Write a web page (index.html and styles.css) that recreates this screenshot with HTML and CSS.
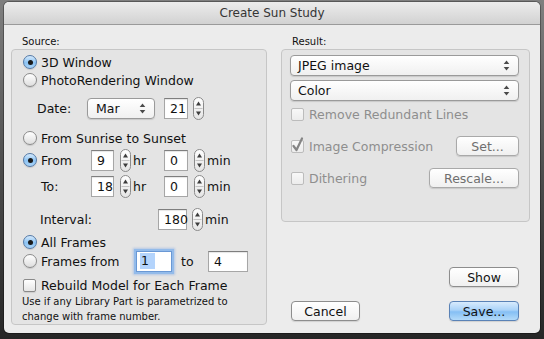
FILE: index.html
```html
<!DOCTYPE html>
<html>
<head>
<meta charset="utf-8">
<title>Create Sun Study</title>
<link rel="stylesheet" href="styles.css">
</head>
<body>
<svg class="defs" width="0" height="0">
  <defs>
    <linearGradient id="stg" x1="0" y1="0" x2="0" y2="1">
      <stop offset="0" stop-color="#ffffff"/>
      <stop offset="1" stop-color="#e4e4e4"/>
    </linearGradient>
    <symbol id="stepper" viewBox="0 0 11 23">
      <rect x="0.5" y="0.5" width="10" height="22" rx="5" fill="url(#stg)" stroke="#8a8a8a"/>
      <line x1="1.5" y1="11.5" x2="9.5" y2="11.5" stroke="#c4c4c4"/>
      <path d="M5.5 4.5 L8 8.5 L3 8.5 Z" fill="#3c3c3c"/>
      <path d="M5.5 18.5 L8 14.5 L3 14.5 Z" fill="#3c3c3c"/>
    </symbol>
    <symbol id="updown" viewBox="0 0 7 11">
      <path d="M3.5 0.5 L6.3 4 L0.7 4 Z" fill="#4a4a4a"/>
      <path d="M3.5 10.5 L6.3 7 L0.7 7 Z" fill="#4a4a4a"/>
    </symbol>
  </defs>
</svg>

<div class="window">
  <div class="titlebar">Create Sun Study</div>
  <div class="content">
    <div class="col-left">
      <div class="group-label">Source:</div>
      <div class="group group-source">
        <div class="row h18"><span class="radio on"></span><span>3D Window</span></div>
        <div class="row h18"><span class="radio"></span><span>PhotoRendering Window</span></div>
        <div class="row h22 mt8 ind-date">
          <span class="lab w50">Date:</span>
          <div class="pop w68"><span>Mar</span><svg class="ud" viewBox="0 0 7 11"><use href="#updown"/></svg></div>
          <span class="fld w24 ml9">21</span>
          <svg class="step ml5" viewBox="0 0 11 23"><use href="#stepper"/></svg>
        </div>
        <div class="row h18 mt10"><span class="radio"></span><span>From Sunrise to Sunset</span></div>
        <div class="row h22 mt2">
          <span class="radio on"></span><span class="lab w50">From</span>
          <span class="fld w23">9</span>
          <svg class="step ml6" viewBox="0 0 11 23"><use href="#stepper"/></svg>
          <span class="unit w31">hr</span>
          <span class="fld w24">0</span>
          <svg class="step ml6" viewBox="0 0 11 23"><use href="#stepper"/></svg>
          <span class="unit">min</span>
        </div>
        <div class="row h22 mt4 ind-to">
          <span class="lab w50">To:</span>
          <span class="fld w23">18</span>
          <svg class="step ml6" viewBox="0 0 11 23"><use href="#stepper"/></svg>
          <span class="unit w31">hr</span>
          <span class="fld w24">0</span>
          <svg class="step ml6" viewBox="0 0 11 23"><use href="#stepper"/></svg>
          <span class="unit">min</span>
        </div>
        <div class="row h22 mt11 ind-int">
          <span class="lab w118">Interval:</span>
          <span class="fld w29">180</span>
          <svg class="step ml5" viewBox="0 0 11 23"><use href="#stepper"/></svg>
          <span class="unit ml2">min</span>
        </div>
        <div class="row h18 mt3"><span class="radio on"></span><span>All Frames</span></div>
        <div class="row h20">
          <span class="radio"></span><span class="lab w95">Frames from</span>
          <span class="fld focus w36"><span class="sel">1</span></span>
          <span class="lab w27 ml9">to</span>
          <span class="fld w40">4</span>
        </div>
        <div class="row h16 mt6"><span class="cb"></span><span>Rebuild Model for Each Frame</span></div>
        <div class="note">Use if any Library Part is parametrized to<br>change with frame number.</div>
      </div>
    </div>

    <div class="col-right">
      <div class="group-label">Result:</div>
      <div class="group group-result">
        <div class="pop h20"><span>JPEG image</span><svg class="ud" viewBox="0 0 7 11"><use href="#updown"/></svg></div>
        <div class="pop h20 mt4"><span>Color</span><svg class="ud" viewBox="0 0 7 11"><use href="#updown"/></svg></div>
        <div class="row h18 mt4 ml1"><span class="cb dis"></span><span class="dtext">Remove Redundant Lines</span></div>
        <div class="row h20 mt13 ml1">
          <span class="cb dis"><svg class="check" viewBox="0 0 13 13"><path d="M2.5 6 L5.5 10 L11 -1.5" fill="none" stroke="#858585" stroke-width="2.2" stroke-linecap="round" stroke-linejoin="round"/></svg></span>
          <span class="dtext">Image Compression</span>
          <button class="btn dbtn w63 mla">Set...</button>
        </div>
        <div class="row h20 mt12 ml1">
          <span class="cb dis"></span>
          <span class="dtext">Dithering</span>
          <button class="btn dbtn w90 mla">Rescale...</button>
        </div>
      </div>
      <button class="btn w70 show">Show</button>
      <div class="bottom-row">
        <button class="btn w69">Cancel</button>
        <button class="btn w70 default">Save...</button>
      </div>
    </div>
  </div>
</div>
</body>
</html>
```

FILE: styles.css
```css
* { box-sizing: border-box; }
html, body { margin: 0; height: 100%; }
body {
  background: linear-gradient(#7f7f7f, #4a4a4a 55%, #262626);
  font-family: "DejaVu Sans", sans-serif;
  font-size: 12.5px;
  color: #111;
  overflow: hidden;
}
.defs { display: block; width: 0; height: 0; }

.window {
  margin: 2px 0 0 4px;
  width: 536px;
  height: 331px;
  background: #ececec;
  border-radius: 5px;
  display: flex;
  flex-direction: column;
  overflow: hidden;
  box-shadow: 0 0 0 1px rgba(0,0,0,0.3);
}
.titlebar {
  flex: none;
  height: 23px;
  line-height: 22px;
  border-bottom: 1px solid #9a9a9a;
  background: linear-gradient(#ececec, #d2d2d2);
  text-align: center;
  font-size: 12px;
  color: #353535;
}
.content {
  display: flex;
  gap: 14px;
  padding: 10px 10px 0 7px;
}
.col-left { width: 256px; display: flex; flex-direction: column; }
.col-right { width: 249px; display: flex; flex-direction: column; }
.group-label {
  height: 14px;
  line-height: 14px;
  font-size: 10px;
  padding-left: 11px;
}
.group {
  border: 1px solid #c6c6c6;
  background: #e4e4e4;
  border-radius: 4px;
}
.group-source {
  height: 276px;
  padding: 3px 0 0 11px;
  display: flex;
  flex-direction: column;
}
.group-result {
  height: 173px;
  padding: 5px 10px 0 8px;
  display: flex;
  flex-direction: column;
}

.row { display: flex; align-items: center; flex: none; white-space: nowrap; }
.h16 { height: 16px; }
.h18 { height: 18px; }
.h20 { height: 20px; }
.h22 { height: 22px; }
.mt2 { margin-top: 2px; }
.mt3 { margin-top: 3px; }
.mt4 { margin-top: 4px; }
.mt5 { margin-top: 5px; }
.mt6 { margin-top: 6px; }
.mt8 { margin-top: 8px; }
.mt10 { margin-top: 10px; }
.mt11 { margin-top: 11px; }
.mt12 { margin-top: 12px; }
.mt13 { margin-top: 13px; }
.ml1 { margin-left: 1px; }
.ml2 { margin-left: 2px; }
.ml5 { margin-left: 5px; }
.ml6 { margin-left: 6px; }
.ml9 { margin-left: 9px; }
.mla { margin-left: auto; }
.ind-date { margin-left: 14px; }
.ind-to { margin-left: 18px; }
.ind-int { margin-left: 17px; }

.lab, .unit { flex: none; }
.unit { margin-left: 2px; }
.w23 { width: 23px; }
.w24 { width: 24px; }
.w27 { width: 27px; }
.w29 { width: 29px; }
.w31 { width: 31px; }
.w36 { width: 36px; }
.w40 { width: 40px; }
.w50 { width: 50px; }
.w63 { width: 63px; }
.w68 { width: 68px; }
.w69 { width: 69px; }
.w70 { width: 70px; }
.w90 { width: 90px; }
.w95 { width: 95px; }
.w118 { width: 118px; }

.radio {
  flex: none;
  width: 14px;
  height: 14px;
  margin-right: 4px;
  border-radius: 50%;
  border: 1px solid #8a8a8a;
  background: linear-gradient(#ffffff, #dedede);
  box-shadow: 0 1px 1px rgba(0,0,0,0.12);
  display: flex;
  align-items: center;
  justify-content: center;
}
.radio.on {
  border-color: #5479a6;
  background: linear-gradient(#d6eafc, #8cc3f3 55%, #a9d3f7);
}
.radio.on::after {
  content: "";
  width: 5px;
  height: 5px;
  border-radius: 50%;
  background: #1a1a1a;
}

.cb {
  flex: none;
  width: 13px;
  height: 13px;
  margin-right: 5px;
  border: 1px solid #8a8a8a;
  border-radius: 2px;
  background: linear-gradient(#ffffff, #e6e6e6);
  box-shadow: 0 1px 1px rgba(0,0,0,0.1);
}
.cb.dis {
  border-color: #bcbcbc;
  background: linear-gradient(#f8f8f8, #ececec);
  box-shadow: none;
}
.check { display: block; width: 13px; height: 13px; overflow: visible; margin: -1px 0 0 -1px; }
.dtext { color: #8e8e8e; }

.fld {
  flex: none;
  height: 21px;
  padding-left: 5px;
  display: flex;
  align-items: center;
  background: #fff;
  border: 1px solid #a6a6a6;
  border-top-color: #7e7e7e;
  box-shadow: inset 0 1px 1px rgba(0,0,0,0.1);
}
.fld.focus {
  padding-left: 3px;
  border-color: #6a98d4;
  box-shadow: 0 0 0 2px #93bbea, 0 0 2px 3px rgba(120,165,230,0.45);
}
.sel { background: #b4d4fc; padding: 0 6px 0 1px; line-height: 16px; }

.pop {
  flex: none;
  height: 21px;
  display: flex;
  align-items: center;
  justify-content: space-between;
  padding: 0 8px 0 8px;
  border: 1px solid #9a9a9a;
  border-radius: 4px;
  background: linear-gradient(#ffffff, #f0f0f0);
  box-shadow: 0 1px 1px rgba(0,0,0,0.12);
}
.group-result .pop { padding-left: 7px; }
.ud { width: 7px; height: 11px; display: block; }
.step { width: 11px; height: 23px; display: block; flex: none; }

.btn {
  flex: none;
  height: 20px;
  padding: 0;
  font: inherit;
  color: #111;
  border: 1px solid #8d8d8d;
  border-radius: 4px;
  background: linear-gradient(#ffffff, #f0f0f0);
  box-shadow: 0 1px 1px rgba(0,0,0,0.12);
  display: flex;
  align-items: center;
  justify-content: center;
}
.dbtn { color: #6f6f6f; border-color: #a9a9a9; }
.default {
  border-color: #5a82b6;
  background: linear-gradient(#d8ebfd, #a9d2f8 45%, #85bff4 55%, #b3daf9);
}
.show { align-self: flex-end; margin: 45px 11px 0 0; }
.bottom-row {
  display: flex;
  justify-content: space-between;
  margin-top: 14px;
  padding: 0 11px 0 10px;
}
.note {
  font-size: 10px;
  line-height: 15px;
  margin-top: 1px;
  margin-left: -1px;
  white-space: nowrap;
}
```
